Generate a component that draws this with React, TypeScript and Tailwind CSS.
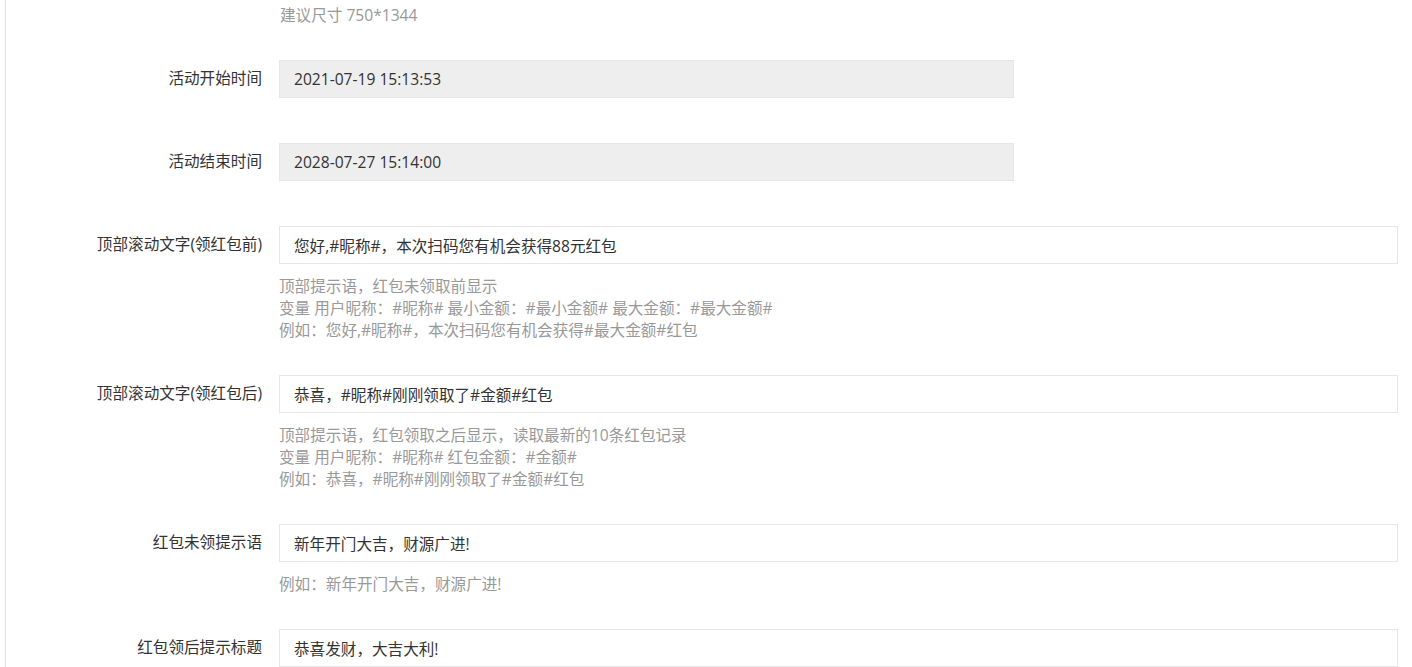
const font = { fontFamily: '"Open Sans", "Noto Sans CJK SC", "Microsoft YaHei", sans-serif' };

interface Field {
	label: string;
	value: string;
	disabled?: boolean;
	help?: string[];
}

const fields: Field[] = [
	{ label: "活动开始时间", value: "2021-07-19 15:13:53", disabled: true },
	{ label: "活动结束时间", value: "2028-07-27 15:14:00", disabled: true },
	{
		label: "顶部滚动文字(领红包前)",
		value: "您好,#昵称#，本次扫码您有机会获得88元红包",
		help: [
			"顶部提示语，红包未领取前显示",
			"变量 用户昵称：#昵称# 最小金额：#最小金额# 最大金额：#最大金额#",
			"例如：您好,#昵称#，本次扫码您有机会获得#最大金额#红包",
		],
	},
	{
		label: "顶部滚动文字(领红包后)",
		value: "恭喜，#昵称#刚刚领取了#金额#红包",
		help: [
			"顶部提示语，红包领取之后显示，读取最新的10条红包记录",
			"变量 用户昵称：#昵称# 红包金额：#金额#",
			"例如：恭喜，#昵称#刚刚领取了#金额#红包",
		],
	},
	{
		label: "红包未领提示语",
		value: "新年开门大吉，财源广进!",
		help: ["例如：新年开门大吉，财源广进!"],
	},
	{ label: "红包领后提示标题", value: "恭喜发财，大吉大利!" },
];

const FormRow = ({ field }: { field: Field }) => {
	return (
		<div className={field.help ? "mb-[34px]" : "mb-[45px]"}>
			<div className="flex items-center">
				<label className="w-[263px] shrink-0 pr-[1px] text-right text-[15.6px] text-[#333]">
					{field.label}
				</label>
				<div className="ml-[16px] flex-1">
					<input
						readOnly
						value={field.value}
						style={font}
						className={
							field.disabled
								? "h-[38px] w-[735px] border border-[#e6e6e6] bg-[#eeeeee] pl-[14px] text-[15.6px] text-[#333] outline-none"
								: "h-[38px] w-full border border-[#e6e6e6] bg-white pl-[14px] text-[15.6px] text-[#333] outline-none"
						}
					/>
				</div>
			</div>
			{field.help && (
				<div className="ml-[279px] mt-[11px] text-[15.6px] leading-[22px] text-[#999]">
					{field.help.map((line) => (
						<div key={line}>{line}</div>
					))}
				</div>
			)}
		</div>
	);
};

export default function App() {
	return (
		<div className="h-[667px] overflow-hidden bg-white" style={font}>
			<div className="ml-[5px] min-h-full border-l border-[#e2e2e2] pr-[14px]">
				<div className="ml-[274px] pt-[4px] text-[15.6px] leading-[22px] text-[#999]">
					建议尺寸 750*1344
				</div>
				<div className="mt-[34px] -ml-[6px]">
					{fields.map((f) => (
						<FormRow key={f.label} field={f} />
					))}
				</div>
			</div>
		</div>
	);
}
